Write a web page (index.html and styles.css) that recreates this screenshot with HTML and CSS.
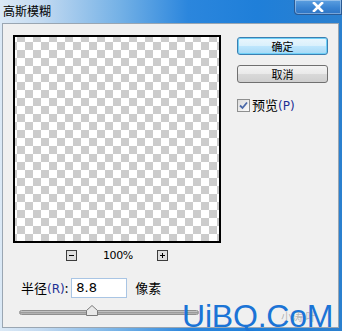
FILE: index.html
```html
<!DOCTYPE html>
<html>
<head>
<meta charset="utf-8">
<link rel="stylesheet" href="styles.css">
</head>
<body>
<div class="window">
  <div class="titlebar">
    <span class="title">高斯模糊</span>
    <div class="close">
      <svg width="12" height="10" viewBox="0 0 12 10"><path d="M2 1 L10 9 M10 1 L2 9" stroke="#fff" stroke-width="2.6" stroke-linecap="square"/></svg>
    </div>
  </div>
  <div class="client">
    <div class="main">
      <div class="left">
        <div class="preview"></div>
        <div class="zoomrow">
          <span class="zbtn"><svg width="9" height="9" viewBox="0 0 9 9"><path d="M2 4.5 H7" stroke="#000" stroke-width="1"/></svg></span>
          <span class="zpct">100%</span>
          <span class="zbtn"><svg width="9" height="9" viewBox="0 0 9 9"><path d="M2 4.5 H7 M4.5 2 V7" stroke="#000" stroke-width="1"/></svg></span>
        </div>
        <div class="radiusrow">
          <span class="label">半径<span class="acc">(R)</span>:</span>
          <div class="input">8.8</div>
          <span class="label">像素</span>
        </div>
        <div class="slider">
          <div class="track"></div>
          <svg class="thumb" width="12" height="11" viewBox="0 0 12 11"><path d="M0.5 10.5 V5.5 L6 0.5 L11.5 5.5 V10.5 Z" fill="#e9e9e9" stroke="#7a7a7a"/></svg>
        </div>
      </div>
      <div class="right">
        <div class="btn primary">确定</div>
        <div class="btn">取消</div>
        <label class="check">
          <span class="box"><svg width="11" height="11" viewBox="0 0 11 11"><path d="M2 5.5 L4.5 8 L9 2.5" stroke="#4a68a8" stroke-width="1.8" fill="none"/></svg></span>
          <span class="ctext">预览<span class="acc">(P)</span></span>
        </label>
      </div>
    </div>
  </div>
  <div class="wm-faint">小涛 叶</div>
  <div class="watermark">UiBQ.CoM</div>
</div>
</body>
</html>
```

FILE: styles.css
```css
html, body {
  margin: 0;
  padding: 0;
  background: #ffffff;
}
body {
  font-family: "Noto Sans CJK SC", "Noto Sans", sans-serif;
}
.window {
  position: relative;
  width: 342px;
  height: 331px;
  display: flex;
  flex-direction: column;
  overflow: hidden;
  background: linear-gradient(to right, #dbe9f6 0, #c3daf1 12%, #74b1e6 35%, #2b86dd 55%, #1f7fd9 75%, #2b80cf 100%);
}
.titlebar {
  height: 23px;
  display: flex;
  justify-content: space-between;
  align-items: flex-start;
  flex: none;
}
.title {
  margin: 3px 0 0 3px;
  font-size: 12px;
  line-height: 16px;
  color: #000;
}
.close {
  width: 48px;
  height: 15px;
  box-sizing: border-box;
  border: 1px solid #2a5a94;
  border-top: none;
  border-radius: 0 0 0 4px;
  background: linear-gradient(#5d9fe0, #3a84d2 55%, #2c74c4);
  box-shadow: inset 0 0 0 1px rgba(255,255,255,0.35);
  display: flex;
  align-items: center;
  justify-content: center;
}
.client {
  flex: 1;
  margin: 0 3px 3px 2px;
  border: 1px solid #9aa6b2;
  background: #f0f0f0;
  padding: 11px 0 0 10px;
}
.main {
  display: flex;
  gap: 16px;
}
.left {
  width: 208px;
  display: flex;
  flex-direction: column;
}
.preview {
  width: 208px;
  height: 208px;
  box-sizing: border-box;
  border: 2px solid #000;
  background: repeating-conic-gradient(#cccccc 0 25%, #ffffff 0 50%);
  background-size: 16px 16px;
  background-position: 2px 5px;
}
.zoomrow {
  margin-top: 7px;
  height: 11px;
  display: flex;
  justify-content: center;
  align-items: center;
  gap: 26px;
}
.zbtn {
  width: 11px;
  height: 11px;
  box-sizing: border-box;
  border: 1px solid #3c3c3c;
  background: #dedede;
  display: flex;
  align-items: center;
  justify-content: center;
}
.zpct {
  font-family: "DejaVu Sans", sans-serif;
  font-size: 11px;
  line-height: 11px;
  color: #000;
  width: 28px;
  text-align: center;
  letter-spacing: -0.4px;
}
.radiusrow {
  margin-top: 17px;
  display: flex;
  align-items: center;
  height: 20px;
  padding-left: 8px;
}
.label {
  font-size: 13px;
  line-height: 16px;
  color: #000;
}
.acc {
  color: #1c2f94;
  font-family: "DejaVu Sans", sans-serif;
  font-size: 12px;
}
.input {
  margin: 0 8px 0 3px;
  width: 56px;
  height: 20px;
  box-sizing: border-box;
  border: 1px solid #a9c5e4;
  background: #fff;
  font-family: "DejaVu Sans", sans-serif;
  font-size: 13px;
  line-height: 18px;
  padding-left: 4px;
  color: #000;
}
.slider {
  margin-top: 7px;
  position: relative;
  height: 11px;
  padding-left: 6px;
  display: flex;
  align-items: center;
}
.track {
  width: 180px;
  height: 5px;
  margin-top: 4px;
  border-radius: 3px;
  background: linear-gradient(#d4d4d4, #9c9c9c 50%, #bdbdbd);
  border: 1px solid #8f8f8f;
  box-sizing: border-box;
}
.thumb {
  position: absolute;
  left: 73px;
  top: 0;
}
.right {
  display: flex;
  flex-direction: column;
  padding-top: 2px;
}
.btn {
  width: 91px;
  height: 18px;
  box-sizing: border-box;
  border: 1px solid #707070;
  border-radius: 3px;
  background: linear-gradient(#f4f4f4 0, #e9e9e9 50%, #d9d9d9 51%, #cfcfcf 100%);
  font-size: 11px;
  line-height: 16px;
  text-align: center;
  color: #000;
  margin-bottom: 10px;
}
.btn.primary {
  border-color: #3c7fb1;
  background: linear-gradient(#eaf6fd 0, #d9f0fc 50%, #bee6fd 51%, #a7d9f5 100%);
  box-shadow: inset 0 0 0 1px #6fd0f7;
}
.check {
  margin-top: 6px;
  display: flex;
  align-items: center;
  gap: 2px;
  height: 13px;
}
.box {
  width: 13px;
  height: 13px;
  box-sizing: border-box;
  border: 1px solid #8e8f8f;
  background: linear-gradient(135deg, #dcdcdc, #fbfbfb);
  display: flex;
  align-items: center;
  justify-content: center;
}
.ctext {
  font-size: 13px;
  line-height: 16px;
  color: #000;
}
.watermark {
  position: absolute;
  left: 182px;
  top: 302px;
  font-family: "Liberation Sans", Arial, sans-serif;
  font-size: 32px;
  line-height: 28px;
  color: #1b74d6;
  letter-spacing: -0.2px;
}
.wm-faint {
  position: absolute;
  left: 281px;
  top: 309px;
  font-size: 11px;
  line-height: 14px;
  color: rgba(90, 90, 90, 0.4);
}
```
